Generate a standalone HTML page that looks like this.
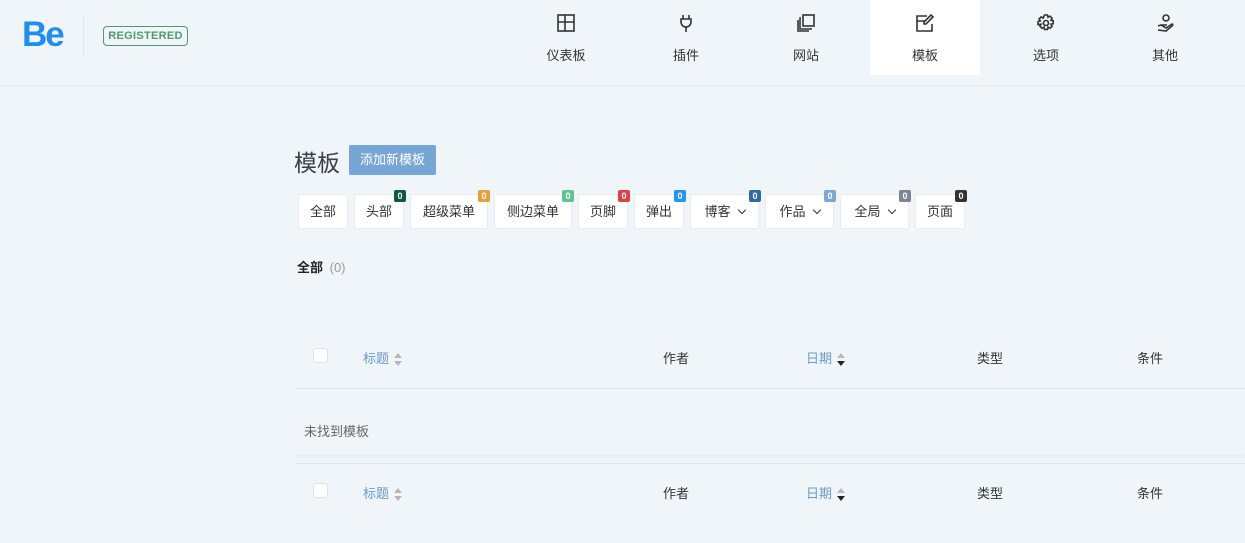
<!DOCTYPE html>
<html><head><meta charset="utf-8"><style>
*{margin:0;padding:0;box-sizing:border-box}
body{width:1245px;height:543px;overflow:hidden;background:#f0f5f9;font-family:"Liberation Sans","Noto Sans CJK SC",sans-serif;color:#333;position:relative}
.a{position:absolute}
.hdr{left:0;top:0;width:1245px;height:86px;border-bottom:1px solid #e3e9ef}
.logo{left:22px;top:15px;font-weight:bold;font-size:35px;color:#1e8ef0;letter-spacing:-2px}
.sep{left:83px;top:15px;width:1px;height:42px;background:#e2e7ec}
.reg{left:103px;top:26px;width:85px;height:20px;border:1.5px solid #4f9a6c;border-radius:4px;color:#4f9a6c;font-size:11px;font-weight:bold;text-align:center;line-height:18px;letter-spacing:.3px}
.nav{top:0;width:110px;height:75px;text-align:center}
.nav.on{background:#fff}
.nav svg{position:absolute;left:45px;top:13px}
.nav span{position:absolute;left:0;right:0;top:45px;font-size:13px;color:#333}
.h1{left:294px;top:144px;font-size:23px;color:#3a4048}
.add{left:349px;top:145px;width:87px;height:30px;background:#76a6d6;color:#fff;font-size:13px;text-align:center;line-height:30px;border-radius:2px}
.b{top:194px;height:35px;background:#fff;border:1px solid #e8ecf0;border-radius:3px;font-size:13px;color:#333;line-height:33px;text-align:center}
.bd{top:190px;width:12px;height:12px;border-radius:2px;color:#fff;font-size:9px;font-weight:bold;text-align:center;line-height:12px}
.chev{display:inline-block;width:6px;height:6px;border-right:1.5px solid #333;border-bottom:1.5px solid #333;transform:rotate(45deg);margin-left:8px;position:relative;top:-3px}
.th{font-size:13px}
.cb{width:15px;height:15px;background:#fff;border:1px solid #dde3e8;border-radius:3px}
.line{left:295px;width:950px;height:1px;background:#dfe5ea}
.sort{display:inline-block;vertical-align:middle;margin-left:5px;width:8px;height:14px;position:relative}
.sort:before{content:"";position:absolute;left:0;top:0;border:4px solid transparent;border-bottom:5px solid #b8b8b8;border-top:0}
.sort:after{content:"";position:absolute;left:0;top:8px;border:4px solid transparent;border-top:5px solid #b8b8b8;border-bottom:0}
.sort.d:after{border-top-color:#222}
.bl{color:#6b9bd0}
</style></head><body>
<div class="a hdr"></div>
<div class="a logo">Be</div>
<div class="a sep"></div>
<div class="a reg">REGISTERED</div>

<div class="a nav" style="left:511px"><svg width="20" height="20" viewBox="0 0 20 20" fill="none" stroke="#333" stroke-width="1.6"><rect x="2" y="2" width="16" height="16"/><path d="M2 9h16M9 2v16"/></svg><span>仪表板</span></div>
<div class="a nav" style="left:631px"><svg width="20" height="20" viewBox="0 0 20 20" fill="none" stroke="#333" stroke-width="1.6"><path d="M7 2v4M13 2v4M5 6h10v3a5 5 0 0 1-10 0zM10 14v5"/></svg><span>插件</span></div>
<div class="a nav" style="left:751px"><svg width="20" height="20" viewBox="0 0 20 20" fill="none" stroke="#333" stroke-width="1.6"><rect x="7" y="2" width="11" height="11"/><path d="M5 5H4v11h11v-1M2 7v11h11"/></svg><span>网站</span></div>
<div class="a nav on" style="left:870px"><svg width="20" height="20" viewBox="0 0 20 20" fill="none" stroke="#333" stroke-width="1.6"><path d="M12 3H2v15h15v-7M2 8h8"/><path d="M16 2l2 2-7 7H9V9z"/></svg><span>模板</span></div>
<div class="a nav" style="left:991px"><svg width="20" height="20" viewBox="0 0 20 20" fill="none" stroke="#333" stroke-width="1.6"><circle cx="10" cy="10" r="2.5"/><path d="M8.5 2h3l.5 2.3 2-1.2 2.1 2.1-1.2 2 2.3.5v3l-2.3.5 1.2 2-2.1 2.1-2-1.2-.5 2.3h-3l-.5-2.3-2 1.2-2.1-2.1 1.2-2L2 11.5v-3l2.3-.5-1.2-2 2.1-2.1 2 1.2z"/></svg><span>选项</span></div>
<div class="a nav" style="left:1110px"><svg width="20" height="20" viewBox="0 0 20 20" fill="none" stroke="#333" stroke-width="1.6"><circle cx="11" cy="5" r="3"/><path d="M6 12h6M3 13l3-1 5 3 6-4c1 0 1 1 0 2l-6 5-8-1"/></svg><span>其他</span></div>

<div class="a h1">模板</div>
<div class="a add">添加新模板</div>

<div class="a b" style="left:298px;width:50px">全部</div>
<div class="a b" style="left:354px;width:50px">头部</div><div class="a bd" style="left:394px;background:#0f5b3e">0</div>
<div class="a b" style="left:410px;width:78px">超级菜单</div><div class="a bd" style="left:478px;background:#e9a03b">0</div>
<div class="a b" style="left:494px;width:78px">侧边菜单</div><div class="a bd" style="left:562px;background:#5cc68c">0</div>
<div class="a b" style="left:578px;width:50px">页脚</div><div class="a bd" style="left:618px;background:#df4242">0</div>
<div class="a b" style="left:634px;width:50px">弹出</div><div class="a bd" style="left:674px;background:#2196f3">0</div>
<div class="a b" style="left:690px;width:69px">博客<i class="chev"></i></div><div class="a bd" style="left:749px;background:#2b6ca8">0</div>
<div class="a b" style="left:765px;width:69px">作品<i class="chev"></i></div><div class="a bd" style="left:824px;background:#7aa7d6">0</div>
<div class="a b" style="left:840px;width:69px">全局<i class="chev"></i></div><div class="a bd" style="left:899px;background:#7a8696">0</div>
<div class="a b" style="left:915px;width:50px">页面</div><div class="a bd" style="left:955px;background:#333">0</div>

<div class="a" style="left:297px;top:257px;font-size:13px;font-weight:bold;color:#222">全部 <span style="font-weight:normal;color:#999;margin-left:3px">(0)</span></div>

<div class="a cb" style="left:313px;top:348px"></div>
<div class="a th bl" style="left:363px;top:348px">标题<i class="sort"></i></div>
<div class="a th" style="left:663px;top:348px">作者</div>
<div class="a th bl" style="left:806px;top:348px">日期<i class="sort d"></i></div>
<div class="a th" style="left:977px;top:348px">类型</div>
<div class="a th" style="left:1137px;top:348px">条件</div>
<div class="a line" style="top:388px"></div>
<div class="a" style="left:295px;top:405px;width:950px;height:50px;box-shadow:0 2px 3px rgba(0,0,0,.04)"></div>
<div class="a" style="left:304px;top:421px;font-size:13px;color:#666">未找到模板</div>
<div class="a line" style="top:463px"></div>
<div class="a cb" style="left:313px;top:483px"></div>
<div class="a th bl" style="left:363px;top:483px">标题<i class="sort"></i></div>
<div class="a th" style="left:663px;top:483px">作者</div>
<div class="a th bl" style="left:806px;top:483px">日期<i class="sort d"></i></div>
<div class="a th" style="left:977px;top:483px">类型</div>
<div class="a th" style="left:1137px;top:483px">条件</div>
</body></html>
